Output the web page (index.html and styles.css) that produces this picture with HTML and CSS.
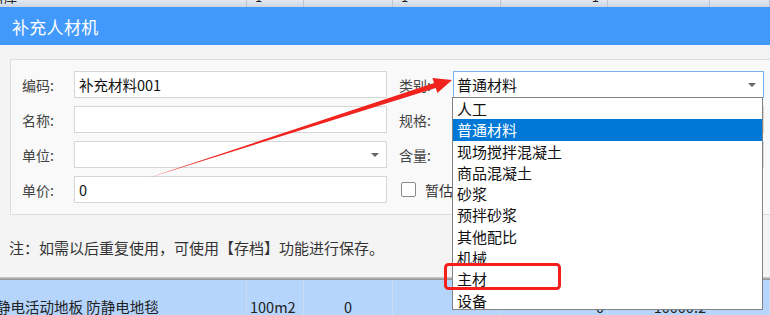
FILE: index.html
```html
<!DOCTYPE html>
<html lang="zh-CN">
<head>
  <meta charset="UTF-8">
  <title>补充人材机</title>
  <link rel="stylesheet" href="styles.css">
</head>
<body>

<div class="screen">
  <!-- grid header behind the dialog -->
  <div class="grid-head">
    <div class="cell c1">材料库</div>
    <div class="cell c2">1</div>
    <div class="cell c3"></div>
    <div class="cell c4">1</div>
    <div class="cell c5 right">1</div>
    <div class="cell c6"></div>
    <div class="cell c7"></div>
  </div>

  <div class="dialog">
    <div class="titlebar">
      <span class="title">补充人材机</span>
      <span class="close">
        <svg width="10" height="10" viewBox="0 0 10 10"><path d="M1 1L9 9M9 1L1 9" stroke="#fff" stroke-width="2"/></svg>
      </span>
    </div>

    <div class="dialog-body">
      <div class="group">
        <div class="col col-left">
          <div class="row"><label>编码:</label><div class="field">补充材料001</div></div>
          <div class="row"><label>名称:</label><div class="field"></div></div>
          <div class="row"><label>单位:</label><div class="field combo"><span></span><i class="caret"></i></div></div>
          <div class="row"><label>单价:</label><div class="field">0</div></div>
        </div>
        <div class="col col-right">
          <div class="row"><label>类别:</label><div class="field combo focus"><span>普通材料</span><i class="caret"></i></div></div>
          <div class="row"><label>规格:</label><div class="field"></div></div>
          <div class="row"><label>含量:</label><div class="field"></div></div>
          <div class="row"><span class="check"></span><span class="check-text">暂估</span></div>
        </div>
      </div>
      <p class="note">注：如需以后重复使用，可使用【存档】功能进行保存。</p>
    </div>
  </div>

  <div class="grid-sep"></div>
  <div class="grid-row">
    <div class="cell c1 name">静电活动地板 防静电地毯</div>
    <div class="cell c2">100m2</div>
    <div class="cell c3 center">0</div>
    <div class="cell c4"></div>
    <div class="cell c5 right">0</div>
    <div class="cell c6 right">10000.2</div>
    <div class="cell c7"></div>
  </div>

  <!-- open combo list -->
  <ul class="dropdown">
    <li>人工</li>
    <li class="selected">普通材料</li>
    <li>现场搅拌混凝土</li>
    <li>商品混凝土</li>
    <li>砂浆</li>
    <li>预拌砂浆</li>
    <li>其他配比</li>
    <li>机械</li>
    <li>主材</li>
    <li>设备</li>
  </ul>

  <!-- red annotation -->
  <svg class="annot" width="770" height="315" viewBox="0 0 770 315">
    <polygon points="148,178 434.1,83.1 432.4,77.9 452,80 437.4,93.1 435.7,87.9" fill="#f0231e"/>
    <rect x="445.5" y="264.5" width="114" height="24" rx="3" fill="none" stroke="#f5201c" stroke-width="3"/>
  </svg>
</div>

</body>
</html>
```

FILE: styles.css
```css
* { box-sizing: border-box; }
body { margin: 0; background: #f4f4f4; font-family: "Noto Sans CJK SC", "Microsoft YaHei", sans-serif; color: #333; }
.screen { position: relative; width: 770px; height: 315px; overflow: hidden; }

/* grid behind */
.grid-head { display: flex; height: 7px; overflow: hidden; background: linear-gradient(#e4e9f1, #cdd5e2); font-size: 13px; }
.grid-head .cell { border-right: 1px solid #b9c2cf; line-height: 1; margin-top: -10px; padding: 0 8px; color: #222; }
.cell { flex: none; overflow: hidden; white-space: nowrap; }
.c1 { width: 247px; }
.c2 { width: 57px; }
.c3 { width: 89px; }
.c4 { width: 108px; }
.c5 { width: 107px; }
.c6 { width: 102px; }
.c7 { flex: 1; }
.grid-head .c1 { padding-left: 0; text-indent: -22px; }

.grid-sep { height: 3px; background: linear-gradient(#cfcfcf, #8c8c8c); }
.grid-row { display: flex; height: 35px; background: #b5d5fd; font-size: 14.5px; color: #222; }
.grid-row .cell { border-right: 1px solid #cddbee; padding: 17px 3px 0; line-height: 20px; }
.grid-row .name { padding-left: 0; text-indent: -4px; }
.grid-row .center { text-align: center; }
.right { text-align: right; padding-right: 4px; }

/* dialog */
.dialog { background: #f4f4f4; }
.titlebar { display: flex; justify-content: space-between; align-items: center; height: 38px; background: #4299fc; padding-left: 12px; }
.title { color: #fff; font-size: 17px; letter-spacing: 0.3px; }
.close { display: flex; margin-right: -10px; margin-top: -2px; }
.dialog-body { height: 232px; padding: 14px 0 0 10px; }

.group { display: flex; width: 770px; height: 156px; border: 1px solid #dcdcdc; border-right: none; background: #f9f9f9; padding: 11px 0 11px 11px; }
.col { display: flex; flex-direction: column; gap: 8px; }
.col-left { width: 366px; }
.col-right { margin-left: 11px; }
.row { display: flex; align-items: center; height: 27px; font-size: 14px; }
.row label { width: 52px; color: #444; }
.col-right .row label { width: 54px; }
.field { display: flex; align-items: center; width: 313px; height: 27px; border: 1px solid #d6d6d6; background: #fff; padding-left: 4px; font-size: 14.5px; color: #111; }
.col-right .field { width: 311px; }
.combo { justify-content: space-between; padding-right: 7px; }
.focus { border-color: #7ab3ec; padding-left: 3px; font-size: 15px; }
.caret { width: 0; height: 0; border-left: 4px solid transparent; border-right: 4px solid transparent; border-top: 4px solid #666; }
.check { width: 15px; height: 15px; border: 1px solid #8a8a8a; border-radius: 2px; background: #fff; margin-left: 2px; }
.check-text { margin-left: 9px; color: #333; }

.note { margin: 23px 0 0 -1px; font-size: 15px; line-height: 20px; color: #333; }

/* dropdown list */
.dropdown { position: absolute; left: 452px; top: 97px; width: 311px; height: 213px; margin: 0; padding: 0; list-style: none; background: #fff; border: 1px solid #828282; font-size: 15px; color: #111; }
.dropdown li { height: 21.3px; line-height: 21.3px; padding-left: 4px; }
.dropdown .selected { background: #0078d7; color: #fff; }

.annot { position: absolute; left: 0; top: 0; pointer-events: none; }
```
